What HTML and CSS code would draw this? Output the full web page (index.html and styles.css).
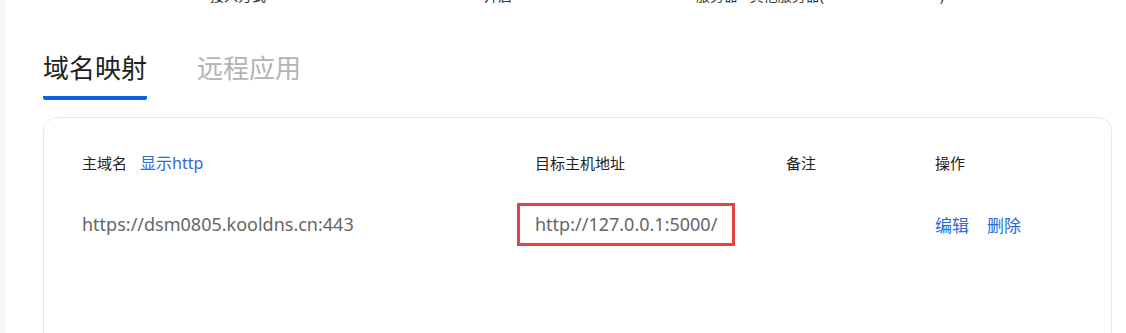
FILE: index.html
```html
<!DOCTYPE html>
<html lang="zh-CN">
<head>
  <meta charset="UTF-8">
  <title>域名映射</title>
  <link rel="stylesheet" href="styles.css">
</head>
<body>

<div class="app">
  <div class="sidebar"></div>
  <div class="main">
    <div class="topline">
      <span class="frag frag-a">接入方式</span>
      <span class="frag frag-b">开启</span>
      <span class="frag frag-c">服务器 - 其他服务器( 　　　　　　　　)</span>
    </div>

    <div class="tabs">
      <div class="tab active">域名映射</div>
      <div class="tab">远程应用</div>
    </div>

    <div class="card">
      <div class="row head">
        <div class="col c1">主域名<a class="link show-http">显示http</a></div>
        <div class="col c2">目标主机地址</div>
        <div class="col c3">备注</div>
        <div class="col c4">操作</div>
      </div>
      <div class="row data">
        <div class="col c1">https://dsm0805.kooldns.cn:443</div>
        <div class="col c2"><span class="target">http://127.0.0.1:5000/</span></div>
        <div class="col c3"></div>
        <div class="col c4 actions"><a class="link">编辑</a><a class="link">删除</a></div>
      </div>
    </div>
  </div>
</div>

</body>
</html>
```

FILE: styles.css
```css
* {
  box-sizing: border-box;
}

html, body {
  margin: 0;
  height: 100%;
  background: #fff;
  font-family: "Noto Sans", "Noto Sans CJK SC", sans-serif;
  overflow: hidden;
}

.app {
  display: flex;
  height: 100%;
}

.sidebar {
  width: 6px;
  background: #f4f7fb;
  flex-shrink: 0;
}

.main {
  flex: 1;
  padding-left: 37px;
}

/* bottom edge of the row above, scrolled out of view */
.topline {
  height: 6px;
  overflow: hidden;
  display: flex;
  font-size: 14px;
  color: #333;
}

.frag {
  line-height: 20px;
  margin-top: -14px;
}

.frag-a { margin-left: 167px; }
.frag-b { margin-left: 218px; }
.frag-c { margin-left: 184px; }

.tabs {
  display: flex;
  gap: 50px;
  margin-top: 44px;
}

.tab {
  font-size: 26px;
  line-height: 36px;
  color: #b3b3b3;
  padding-bottom: 10px;
  border-bottom: 4px solid transparent;
}

.tab.active {
  color: #222;
  border-bottom-color: #0b62e6;
  border-radius: 2px;
}

.card {
  margin-top: 17px;
  width: 1069px;
  height: 240px;
  border: 1px solid #e8e8e8;
  border-radius: 14px;
  padding: 0 38px;
}

.row {
  display: flex;
  align-items: center;
}

.head {
  height: 44px;
  margin-top: 22px;
  font-size: 15px;
  color: #222;
}

.data {
  height: 44px;
  margin-top: 18px;
  font-size: 18px;
  color: #666;
}

.c1 { width: 453px; }
.c2 { width: 251px; }
.c3 { width: 149px; }

.link {
  color: #2b6ad9;
  cursor: pointer;
}

.show-http {
  margin-left: 13px;
  font-size: 16px;
}

.actions {
  font-size: 17px;
}

.actions .link + .link {
  margin-left: 18px;
}

.target {
  display: inline-block;
  margin-left: -18px;
  padding: 0 15px;
  line-height: 37px;
  border: 3px solid #e24444;
}
```
